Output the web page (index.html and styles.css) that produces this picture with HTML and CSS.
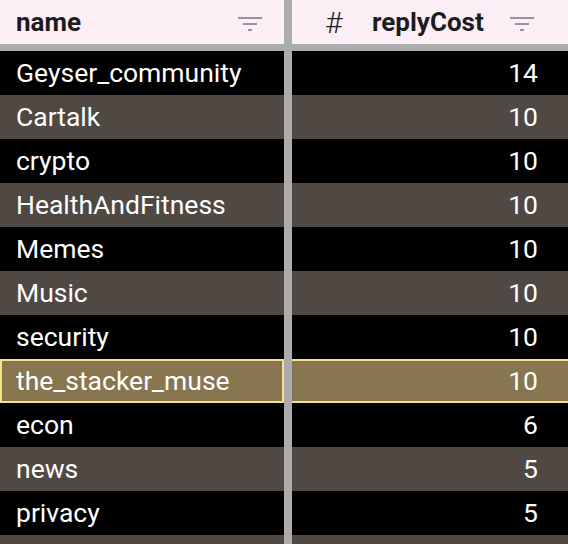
FILE: index.html
```html
<!DOCTYPE html>
<html>
<head>
<meta charset="utf-8">
<link rel="stylesheet" href="styles.css">
</head>
<body>
<div class="grid">
  <div class="head">
    <span class="htitle">name</span>
    <svg class="filter" width="24" height="14" viewBox="0 0 24 14"><rect x="0" y="0" width="24" height="2"/><rect x="5" y="6" width="14" height="2"/><rect x="10" y="12" width="4" height="2"/></svg>
  </div>
  <div class="head head-num">
    <span class="hash">#</span>
    <span class="htitle">replyCost</span>
    <svg class="filter" width="24" height="14" viewBox="0 0 24 14"><rect x="0" y="0" width="24" height="2"/><rect x="5" y="6" width="14" height="2"/><rect x="10" y="12" width="4" height="2"/></svg>
  </div>

  <div class="cell odd">Geyser_community</div><div class="cell num odd">14</div>
  <div class="cell even">Cartalk</div><div class="cell num even">10</div>
  <div class="cell odd">crypto</div><div class="cell num odd">10</div>
  <div class="cell even">HealthAndFitness</div><div class="cell num even">10</div>
  <div class="cell odd">Memes</div><div class="cell num odd">10</div>
  <div class="cell even">Music</div><div class="cell num even">10</div>
  <div class="cell odd">security</div><div class="cell num odd">10</div>
  <div class="cell sel focus">the_stacker_muse</div><div class="cell num sel">10</div>
  <div class="cell odd">econ</div><div class="cell num odd">6</div>
  <div class="cell even">news</div><div class="cell num even">5</div>
  <div class="cell odd">privacy</div><div class="cell num odd">5</div>
  <div class="cell even last"></div><div class="cell num even last"></div>
</div>
</body>
</html>
```

FILE: styles.css
```css
html, body {
  margin: 0;
  padding: 0;
  background: #acacac;
  overflow: hidden;
}
.grid {
  display: grid;
  grid-template-columns: 284px 276px;
  column-gap: 8px;
  grid-template-rows: 51px repeat(11, 44px) 9px;
  height: 544px;
  overflow: hidden;
  background: #acacac;
  font-family: Roboto, "Liberation Sans", sans-serif;
}
.head {
  align-self: start;
  background: #fbeef4;
  display: flex;
  align-items: center;
  padding: 0 22px 0 16px;
  height: 44px;
  box-sizing: border-box;
}
.head-num {
  padding-left: 33px;
  padding-right: 34px;
}
.htitle {
  font-weight: 700;
  font-size: 26px;
  color: #1c1b1f;
  flex: 1;
}
.hash {
  font-size: 30px;
  font-weight: 300;
  color: #1c1b1f;
  width: 47px;
}
.filter {
  fill: #a08e9a;
  margin-top: 4px;
}
.cell {
  display: flex;
  align-items: center;
  padding: 0 16px 2px;
  font-size: 26.5px;
  color: #ffffff;
  box-sizing: border-box;
  height: 44px;
  white-space: nowrap;
}
.cell.last {
  height: 9px;
  padding: 0;
}
.num {
  justify-content: flex-end;
  padding-right: 30px;
}
.odd { background: #000000; }
.even { background: #504843; }
.sel {
  background: #877650;
  border-top: 2px solid #f6e18a;
  border-bottom: 2px solid #f6e18a;
}
.focus {
  border: 2px solid #f6e18a;
  padding-left: 14px;
}
```
